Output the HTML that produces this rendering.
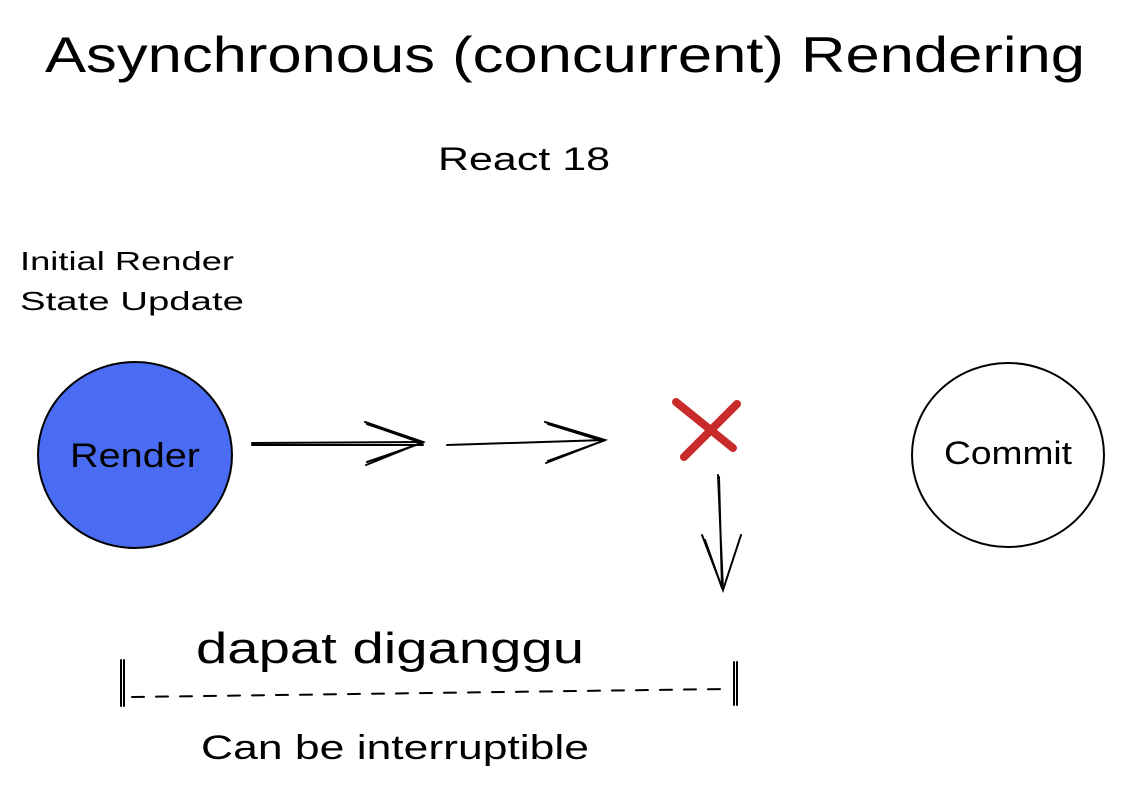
<!DOCTYPE html>
<html><head><meta charset="utf-8"><style>
html,body{margin:0;padding:0;background:#fff;width:1138px;height:791px;overflow:hidden}
svg text{font-family:"Liberation Sans",sans-serif;fill:#000}
</style></head><body>
<svg width="1138" height="791" viewBox="0 0 1138 791" xmlns="http://www.w3.org/2000/svg">
<text x="565" y="72" font-size="50" text-anchor="middle" textLength="1040" lengthAdjust="spacingAndGlyphs">Asynchronous (concurrent) Rendering</text>
<text x="524" y="170" font-size="32" text-anchor="middle" textLength="172" lengthAdjust="spacingAndGlyphs">React 18</text>
<text x="20" y="270" font-size="26" textLength="214" lengthAdjust="spacingAndGlyphs">Initial Render</text>
<text x="20" y="310" font-size="26" textLength="224" lengthAdjust="spacingAndGlyphs">State Update</text>
<ellipse cx="135" cy="455" rx="97" ry="93" fill="#4a6cf2" stroke="#000" stroke-width="2"/>
<text x="135" y="467" font-size="34" text-anchor="middle" textLength="130" lengthAdjust="spacingAndGlyphs">Render</text>
<ellipse cx="1008" cy="455" rx="96" ry="92" fill="#fff" stroke="#000" stroke-width="2"/>
<text x="1008" y="464" font-size="32" text-anchor="middle" textLength="128" lengthAdjust="spacingAndGlyphs">Commit</text>
<g stroke="#000" stroke-width="2" fill="none" stroke-linecap="round">
<path d="M252 443 L423 442 M252 445 L423 445"/>
<path d="M365 422 L423 442 L366 465 M367 424 L422 443 L367 462"/>
<path d="M447 445 L605 440"/>
<path d="M545 422 L605 440 L546 463 M548 424 L603 441 L548 461"/>
<path d="M718 475 L723 590 M719 477 L722 588"/>
<path d="M702 535 L723 590 L741 535 M705 540 L722 588"/>
<path d="M121 660 L121 706 M124 660 L124 706"/>
<path d="M734 662 L734 705 M737 662 L737 705"/>
<path d="M132 697 L725 689" stroke-dasharray="12 12"/>
</g>
<g stroke="#c92a2a" stroke-width="8" stroke-linecap="round">
<path d="M676 402 L733 448"/><path d="M737 404 L684 457"/>
</g>
<text x="390" y="663" font-size="44" text-anchor="middle" textLength="388" lengthAdjust="spacingAndGlyphs">dapat diganggu</text>
<text x="395" y="759" font-size="34" text-anchor="middle" textLength="388" lengthAdjust="spacingAndGlyphs">Can be interruptible</text>
</svg>
</body></html>
